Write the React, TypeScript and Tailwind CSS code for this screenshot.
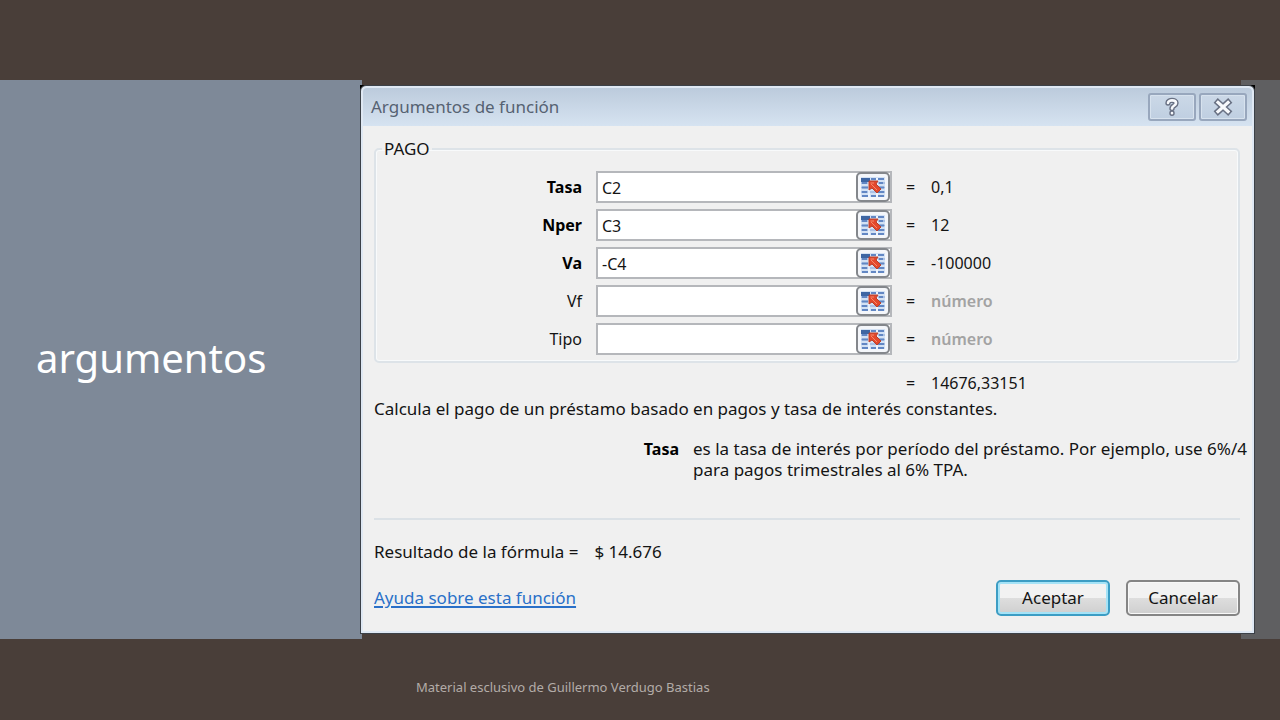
import React from 'react';

interface Argument {
    id: string;
    label: string;
    value: string;
    result: string;
    required: boolean;
}

const args: Argument[] = [
    { id: 'tasa', label: 'Tasa', value: 'C2', result: '0,1', required: true },
    { id: 'nper', label: 'Nper', value: 'C3', result: '12', required: true },
    { id: 'va', label: 'Va', value: '-C4', result: '-100000', required: true },
    { id: 'vf', label: 'Vf', value: '', result: '', required: false },
    { id: 'tipo', label: 'Tipo', value: '', result: '', required: false },
];

const RangeIcon: React.FC = () => (
    <svg viewBox="0 0 26 24" className="w-[26px] h-6 shrink-0" aria-hidden="true">
        <rect x="1" y="2" width="24" height="20" fill="#d3e1f4" />
        <path d="M1 8H25M1 12.500H25M1 17H25" stroke="#9db7e0" strokeWidth="1.500" />
        <path d="M9 3V22M17 3V22" stroke="#f6faff" strokeWidth="1.500" />
        <path d="M11 4H16M18 4H24M2 8H7M19 8H23M2 12.500H8M19 12.500H24M2 17H7M11 21H16M18 17H24M2 21H8M18 21H24" stroke="#6287c4" strokeWidth="2" />
        <rect x="1" y="3" width="9" height="4" fill="#3d65a3" />
        <path d="M9 6H18L16 9L21 14L17 18L12 13L9 15Z" fill="#e4482c" stroke="#b8402c" strokeWidth="1" strokeLinejoin="round" />
        <path d="M10.500 8L14 8M11 9L17 15" stroke="#f58a6c" strokeWidth="1" />
    </svg>
);

const HelpIcon: React.FC = () => (
    <svg viewBox="0 0 16 20" className="w-4 h-5" fill="none" aria-hidden="true">
        <path d="M4 6C4 2.500 12 2.500 12 6C12 9 8 8.500 8 11.500M8 16V16.200" stroke="#687083" strokeWidth="5.400" strokeLinecap="round" strokeLinejoin="round" />
        <path d="M4 6C4 2.500 12 2.500 12 6C12 9 8 8.500 8 11.500M8 16V16.200" stroke="#f7f9fc" strokeWidth="2.600" strokeLinecap="round" strokeLinejoin="round" />
    </svg>
);

const CloseIcon: React.FC = () => (
    <svg viewBox="0 0 20 18" className="w-5 h-[18px]" fill="none" aria-hidden="true">
        <path d="M5 4.500L15 13.500M15 4.500L5 13.500" stroke="#687083" strokeWidth="6.200" strokeLinecap="square" strokeLinejoin="round" />
        <path d="M5 4.500L15 13.500M15 4.500L5 13.500" stroke="#f7f9fc" strokeWidth="3.200" strokeLinecap="square" />
    </svg>
);

const captionButton =
    'flex items-center justify-center w-12 h-7 rounded-[3px] border-2 border-[#98a7bd] bg-linear-to-b from-[#cbd8e7] to-[#bfcfe1] shadow-[inset_0_0_0_1px_#d7e2ee]';

const ArgumentRow: React.FC<{ arg: Argument }> = ({ arg }) => (
    <div className="grid grid-cols-[206fr_296fr_332fr] items-center gap-x-3.5">
        <label htmlFor={arg.id} className={arg.required ? 'text-right font-bold text-black' : 'text-right'}>
            {arg.label}
        </label>
        <div className="flex h-8 border-2 border-[#b5b7bb] bg-white">
            <input id={arg.id} type="text" defaultValue={arg.value} className="min-w-0 flex-1 px-1 pt-0.5 outline-none" />
            <button
                type="button"
                aria-label={`Seleccionar ${arg.label}`}
                className="flex items-center justify-center -my-px w-[34px] h-[30px] rounded-[5px] border-2 border-[#84878c] bg-[#f4f6fa]"
            >
                <RangeIcon />
            </button>
        </div>
        <div className="flex">
            <span className="w-[25px]">=</span>
            {arg.result ? <span>{arg.result}</span> : <span className="font-semibold text-[#a3a3a3]">número</span>}
        </div>
    </div>
);

const FunctionDialog: React.FC = () => (
    <section
        role="dialog"
        aria-labelledby="dialog-title"
        className="flex flex-col h-full rounded-t-md border border-[#3c4148] bg-[#dfe8f3] p-0.5 text-[16px] leading-[22px] text-[#141414]"
    >
        <header className="flex items-center justify-between h-[38px] rounded-t bg-linear-to-b from-[#bccbdc] to-[#d6e3f1] pl-2 pr-[5px]">
            <h2 id="dialog-title" className="text-[17px] text-[#566272]">Argumentos de función</h2>
            <div className="flex gap-[3px]">
                <button type="button" aria-label="Ayuda" className={captionButton}>
                    <HelpIcon />
                </button>
                <button type="button" aria-label="Cerrar" className={captionButton}>
                    <CloseIcon />
                </button>
            </div>
        </header>

        <div className="flex flex-1 flex-col bg-[#f0f0f0] pl-[11px] pr-3 pt-3 pb-[15px]">
            <fieldset className="rounded-[5px] border-2 border-[#dde3e8] pb-1.5 shadow-[inset_0_0_0_1px_#f8fafb]">
                <legend className="ml-1.5 px-0.5 text-[17px]">PAGO</legend>
                <div className="flex flex-col gap-1.5 pt-[11px]">
                    {args.map((arg) => (
                        <ArgumentRow key={arg.id} arg={arg} />
                    ))}
                </div>
            </fieldset>

            <div className="grid grid-cols-[206fr_296fr_332fr] gap-x-3.5 px-0.5 pt-[9px]">
                <output className="col-start-3 flex">
                    <span className="w-[25px]">=</span>14676,33151
                </output>
            </div>
            <p className="mt-1 text-[17px]">
                Calcula el pago de un préstamo basado en pagos y tasa de interés constantes.
            </p>
            {/* the description runs a little into the right padding */}
            <div className="flex items-baseline gap-3.5 -mr-3 pt-[18px] leading-[21px]">
                <strong className="w-[305px] shrink-0 text-right text-black">Tasa</strong>
                <p className="text-[17px]">
                    es la tasa de interés por período del préstamo. Por ejemplo, use 6%/4 para pagos trimestrales al 6% TPA.
                </p>
            </div>

            <div className="mt-auto border-t-2 border-[#dbe1e6] pt-[21px] text-[17px]">
                <p className="flex gap-4">
                    <span>Resultado de la fórmula =</span>
                    <span>$ 14.676</span>
                </p>
                <div className="flex items-center justify-between pt-[17px]">
                    <a href="#ayuda" className="text-[#2a70c8] underline decoration-2 underline-offset-2">Ayuda sobre esta función</a>
                    <div className="flex gap-4">
                        <button
                            type="button"
                            className="w-[114px] h-9 rounded-[5px] border-2 border-[#3c9dc4] bg-linear-to-b from-[#f2f2f2] from-50% via-[#dedede] via-50% to-[#cfcfcf] shadow-[inset_0_0_0_2px_#a5e3f7]"
                        >
                            Aceptar
                        </button>
                        <button
                            type="button"
                            className="w-[114px] h-9 rounded-[5px] border-2 border-[#858585] bg-linear-to-b from-[#f2f2f2] from-50% via-[#dedede] via-50% to-[#cfcfcf] shadow-[inset_0_0_0_1px_#f8f8f8]"
                        >
                            Cancelar
                        </button>
                    </div>
                </div>
            </div>
        </div>
    </section>
);

const App: React.FC = () => {
    return (
        <div className="flex flex-col min-h-screen bg-[#493e39] pt-20 font-['Noto_Sans',sans-serif]">
            <main className="flex flex-1">
                <aside className="flex items-center w-[362px] shrink-0 bg-[#7e8998] pl-9 pb-1">
                    <h1 className="text-[40px] leading-[50px] text-white">argumentos</h1>
                </aside>
                <div className="relative flex-1 -ml-0.5 -mr-3.5 pt-[5px] pb-[5px]">
                    <div className="h-full bg-black">
                        <FunctionDialog />
                    </div>
                </div>
                <div className="w-[39px] bg-[#5f5f61]" />
            </main>
            <footer className="h-[81px] pl-[416px] pt-[38px] text-[13px] leading-5 text-[#b3aca8]">
                Material esclusivo de Guillermo Verdugo Bastias
            </footer>
        </div>
    );
};

export default App;
